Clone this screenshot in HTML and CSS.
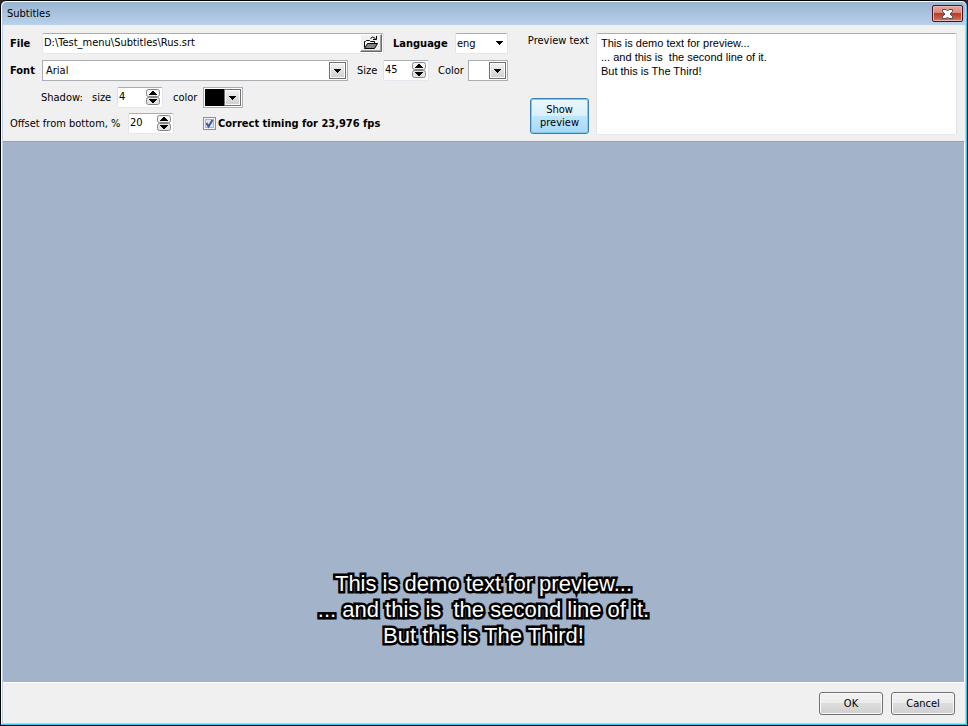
FILE: index.html
```html
<!DOCTYPE html>
<html lang="en">
<head>
<meta charset="utf-8">
<title>Subtitles</title>
<link rel="stylesheet" href="styles.css">
</head>
<body>
<svg class="defs" aria-hidden="true">
  <symbol id="spin" viewBox="0 0 14 16">
    <rect x="0.5" y="0.5" width="13" height="7" rx="2" fill="#f2f2f2" stroke="#858585"/>
    <rect x="0.5" y="8.5" width="13" height="7" rx="2" fill="#e4e4e4" stroke="#858585"/>
    <path d="M6 2h2v1h1v1h1v1h1v1H3V5h1V4h1V3h1zM3 10h8v1h-1v1H9v1H8v1H6v-1H5v-1H4v-1H3z" fill="#000"/>
  </symbol>
  <symbol id="down" viewBox="0 0 7 4">
    <path d="M0 0h7v1H6v1H5v1H4v1H3V3H2V2H1V1H0z" fill="#000"/>
  </symbol>
</svg>
<main class="window">
  <header class="titlebar">
    <h1 class="title">Subtitles</h1>
    <button class="close" type="button" aria-label="Close">
      <svg width="13" height="10" viewBox="0 0 13 10"><path d="M1.500 .5h3.500l1.500 1.500 1.500-1.500h3.500v2L9 5l2.500 2.500v2H8L6.500 8 5 9.500H1.500v-2L4 5 1.500 2.500z" fill="#fff" stroke="#53535f"/></svg>
    </button>
  </header>
  <form class="client">
    <section class="settings">
      <div class="options">
        <div class="row">
          <label class="name" for="file">File</label>
          <div class="field file"><input id="file" type="text" value="D:\Test_menu\Subtitles\Rus.srt">
            <button class="browse" type="button" aria-label="Browse">
              <svg width="16" height="14" viewBox="0 0 16 14"><path d="M1.500 11.500v-6h1l1-1h3l1 1h4v2" fill="#fff" stroke="#000"/><path d="M1.500 12.500l3-5h10l-3 5z" fill="#848484" stroke="#000"/><path d="M7.500 2.500q2-3 5 0M10 3.500h3.500V0" fill="none" stroke="#000"/></svg>
            </button>
          </div>
          <label class="name language" for="language">Language</label>
          <div class="field lang"><select id="language"><option>eng</option></select><svg class="down"><use href="#down"/></svg></div>
        </div>
        <div class="row">
          <label class="name" for="font">Font</label>
          <div class="combo font"><select id="font"><option>Arial</option></select><span class="drop"><svg class="down"><use href="#down"/></svg></span></div>
          <label class="size-name" for="size">Size</label>
          <div class="field spin"><input id="size" type="text" value="45"><svg class="arrows"><use href="#spin"/></svg></div>
          <label class="color-name" for="color">Color</label>
          <button class="combo swatch" id="color" type="button"><span class="ink"></span><span class="drop"><svg class="down"><use href="#down"/></svg></span></button>
        </div>
        <div class="row">
          <span class="shadow-name">Shadow:</span>
          <label class="shadow-size" for="ssize">size</label>
          <div class="field spin"><input id="ssize" type="text" value="4"><svg class="arrows"><use href="#spin"/></svg></div>
          <label class="shadow-color" for="scolor">color</label>
          <button class="combo swatch" id="scolor" type="button"><span class="ink black"></span><span class="drop"><svg class="down"><use href="#down"/></svg></span></button>
        </div>
        <div class="row last">
          <label class="offset-name" for="offset">Offset from bottom, %</label>
          <div class="field spin"><input id="offset" type="text" value="20"><svg class="arrows"><use href="#spin"/></svg></div>
          <span class="tick">
            <input class="check" id="timing" type="checkbox" checked>
            <svg class="mark" viewBox="0 0 13 13"><path d="M3.500 6L5.500 9.500L9.500 3" fill="none" stroke="#4158a0" stroke-width="2"/></svg>
          </span>
          <label class="timing" for="timing">Correct timing for 23,976 fps</label>
        </div>
      </div>
      <div class="side">
        <label class="text-name" for="text">Preview text</label>
        <button class="show" type="button">Show<br>preview</button>
      </div>
      <textarea class="text" id="text">This is demo text for preview...
... and this is  the second line of it.
But this is The Third!</textarea>
    </section>
    <section class="preview"><p class="subtitle">This is demo text for preview...
... and this is  the second line of it.
But this is The Third!</p></section>
    <footer class="footer">
      <button class="btn" type="submit">OK</button>
      <button class="btn" type="button">Cancel</button>
    </footer>
  </form>
</main>
</body>
</html>
```
FILE: styles.css
```css
* { box-sizing: border-box; }
html, body { height: 100%; }
body {
  margin: 0;
  background: #2b2632;
  color: #000;
  font: 11px/14px "DejaVu Sans Condensed", "DejaVu Sans", sans-serif;
}
.defs { position: absolute; width: 0; height: 0; }
input, select, button, textarea { font: inherit; color: inherit; margin: 0; }
h1, p { margin: 0; }
.window {
  display: flex;
  flex-direction: column;
  height: 100%;
  border: 1px solid #000;
  border-radius: 6px 6px 0 0;
  background: #b9d1ea;
  box-shadow: inset -1px -1px #35c8ee, inset 1px 1px #fff;
  padding: 1px 2px 2px 1px;
}
.titlebar {
  display: flex;
  justify-content: space-between;
  height: 23px;
  border-radius: 5px 5px 0 0;
  background: linear-gradient(#99b4d1, #b9d1ea);
}
.title { padding: 5px; font: inherit; }
.close {
  display: flex;
  align-items: center;
  justify-content: center;
  width: 31px;
  height: 17px;
  margin-top: 3px;
  margin-right: 2px;
  padding: 0;
  border: 1px solid #431422;
  border-radius: 2px;
  background: linear-gradient(#e8a698, #d98678 48%, #b83b25 50%, #d3745c);
  box-shadow: inset 0 0 0 1px #eab9ae;
}
.client {
  flex: 1;
  display: flex;
  flex-direction: column;
  min-height: 0;
  margin-left: 1px;
  background: #f0f0f0;
}
.settings {
  display: flex;
  padding: 8px 8px 6px 7px;
}
.options { width: 505px; margin-right: 13px; }
.row { display: flex; align-items: center; height: 20px; margin-bottom: 7px; }
.row.last { margin: -1px 0 0; }
.row > label, .row > span, .field > input, .lang > select, .combo > select { padding-top: 2px; }
.name { width: 32px; font-weight: bold; }
.field, .text {
  border: 1px solid;
  border-color: #abadb3 #e2e3ea #e3e9ef #e2e3ea;
  border-radius: 2px;
  background: #fff;
}
.field { display: flex; align-items: center; height: 21px; }
.field input { flex: 1; width: 0; min-width: 0; border: 0; padding: 0 1px; background: none; }
.file { width: 342px; margin-right: 9px; padding-right: 1px; }
.browse {
  width: 22px;
  height: 18px;
  padding: 1px 2px;
  border: 1px solid;
  border-color: #fff #696969 #696969 #fff;
  background: #f0f0f0;
  box-shadow: inset -1px -1px #a0a0a0;
}
.browse svg, .close svg { display: block; }
.name.language { width: 62px; }
select { appearance: none; flex: 1; min-width: 0; border: 0; padding: 0 1px; background: none; }
.lang { width: 53px; padding-right: 4px; }
.combo {
  display: flex;
  align-items: center;
  height: 21px;
  padding: 1px;
  border: 1px solid #abadb3;
  background: #fff;
}
.font { width: 306px; margin-right: 9px; }
.font select { padding-left: 2px; }
.drop {
  display: grid;
  place-items: center;
  width: 17px;
  height: 17px;
  border: 1px solid #707070;
  background: linear-gradient(#f2f2f2, #cfcfcf);
  box-shadow: inset 0 0 0 1px #fafafa;
  padding-top: 1px;
}
.down { width: 7px; height: 4px; }
.spin { width: 46px; padding-right: 2px; }
.arrows { width: 14px; height: 16px; }
.size-name { width: 26px; }
.color-name { width: 30px; margin-left: 9px; }
.swatch { width: 40px; }
.ink { flex: 1; height: 17px; }
.black { background: #000; }
.shadow-name { width: 51px; margin-left: 31px; }
.shadow-size { width: 25px; }
.shadow-color { width: 30px; margin-left: 10px; }
.offset-name { width: 118px; white-space: nowrap; }
.row > .tick { position: relative; display: flex; margin-left: 29px; padding: 0; }
.check {
  appearance: none;
  width: 13px;
  height: 13px;
  border: 1px solid #8e8f8f;
  background: #dfe5ee;
  box-shadow: inset 0 0 0 1px #f4f4f4, inset 0 0 0 2px #aeb3b9;
}
.mark { position: absolute; inset: 0; visibility: hidden; pointer-events: none; }
.check:checked + .mark { visibility: visible; }
.timing { margin-left: 2px; font-weight: bold; white-space: nowrap; }
.side {
  display: flex;
  flex-direction: column;
  justify-content: space-between;
  align-items: flex-end;
  width: 61px;
  margin-right: 7px;
  white-space: nowrap;
}
.text-name { padding-top: 1px; }
.show {
  width: 59px;
  height: 36px;
  margin-bottom: 1px;
  padding: 0;
  border: 1px solid #3c7fb1;
  border-radius: 3px;
  background: linear-gradient(#eaf6fd, #d9f0fc 49%, #bee6fd 50%, #a7d9f5);
  box-shadow: inset 0 0 0 1px #7fcbee;
  line-height: 13px;
}
.text {
  flex: 1;
  height: 102px;
  padding: 2px 4px;
  resize: none;
  font: 11px/14px "Liberation Sans", sans-serif;
}
.preview {
  flex: 1;
  display: flex;
  flex-direction: column;
  justify-content: flex-end;
  align-items: center;
  border-top: 1px solid #a0a0a0;
  border-bottom: 1px solid #fff;
  border-right: 1px solid #fff;
  background: #a3b3ca;
  padding-bottom: 33px;
}
.subtitle {
  color: #fff;
  font: 22px/26px "Liberation Sans", sans-serif;
  text-align: center;
  white-space: pre;
  paint-order: stroke;
  -webkit-text-stroke: 5px #000;
}
.footer { display: flex; justify-content: flex-end; gap: 8px; padding: 9px 10px 8px; }
.btn {
  width: 64px;
  height: 23px;
  padding: 0;
  border: 1px solid #707070;
  border-radius: 3px;
  background: linear-gradient(#f2f2f2, #ebebeb 49%, #dddddd 50%, #cfcfcf);
  box-shadow: inset 0 0 0 1px #fafafa;
}
```
